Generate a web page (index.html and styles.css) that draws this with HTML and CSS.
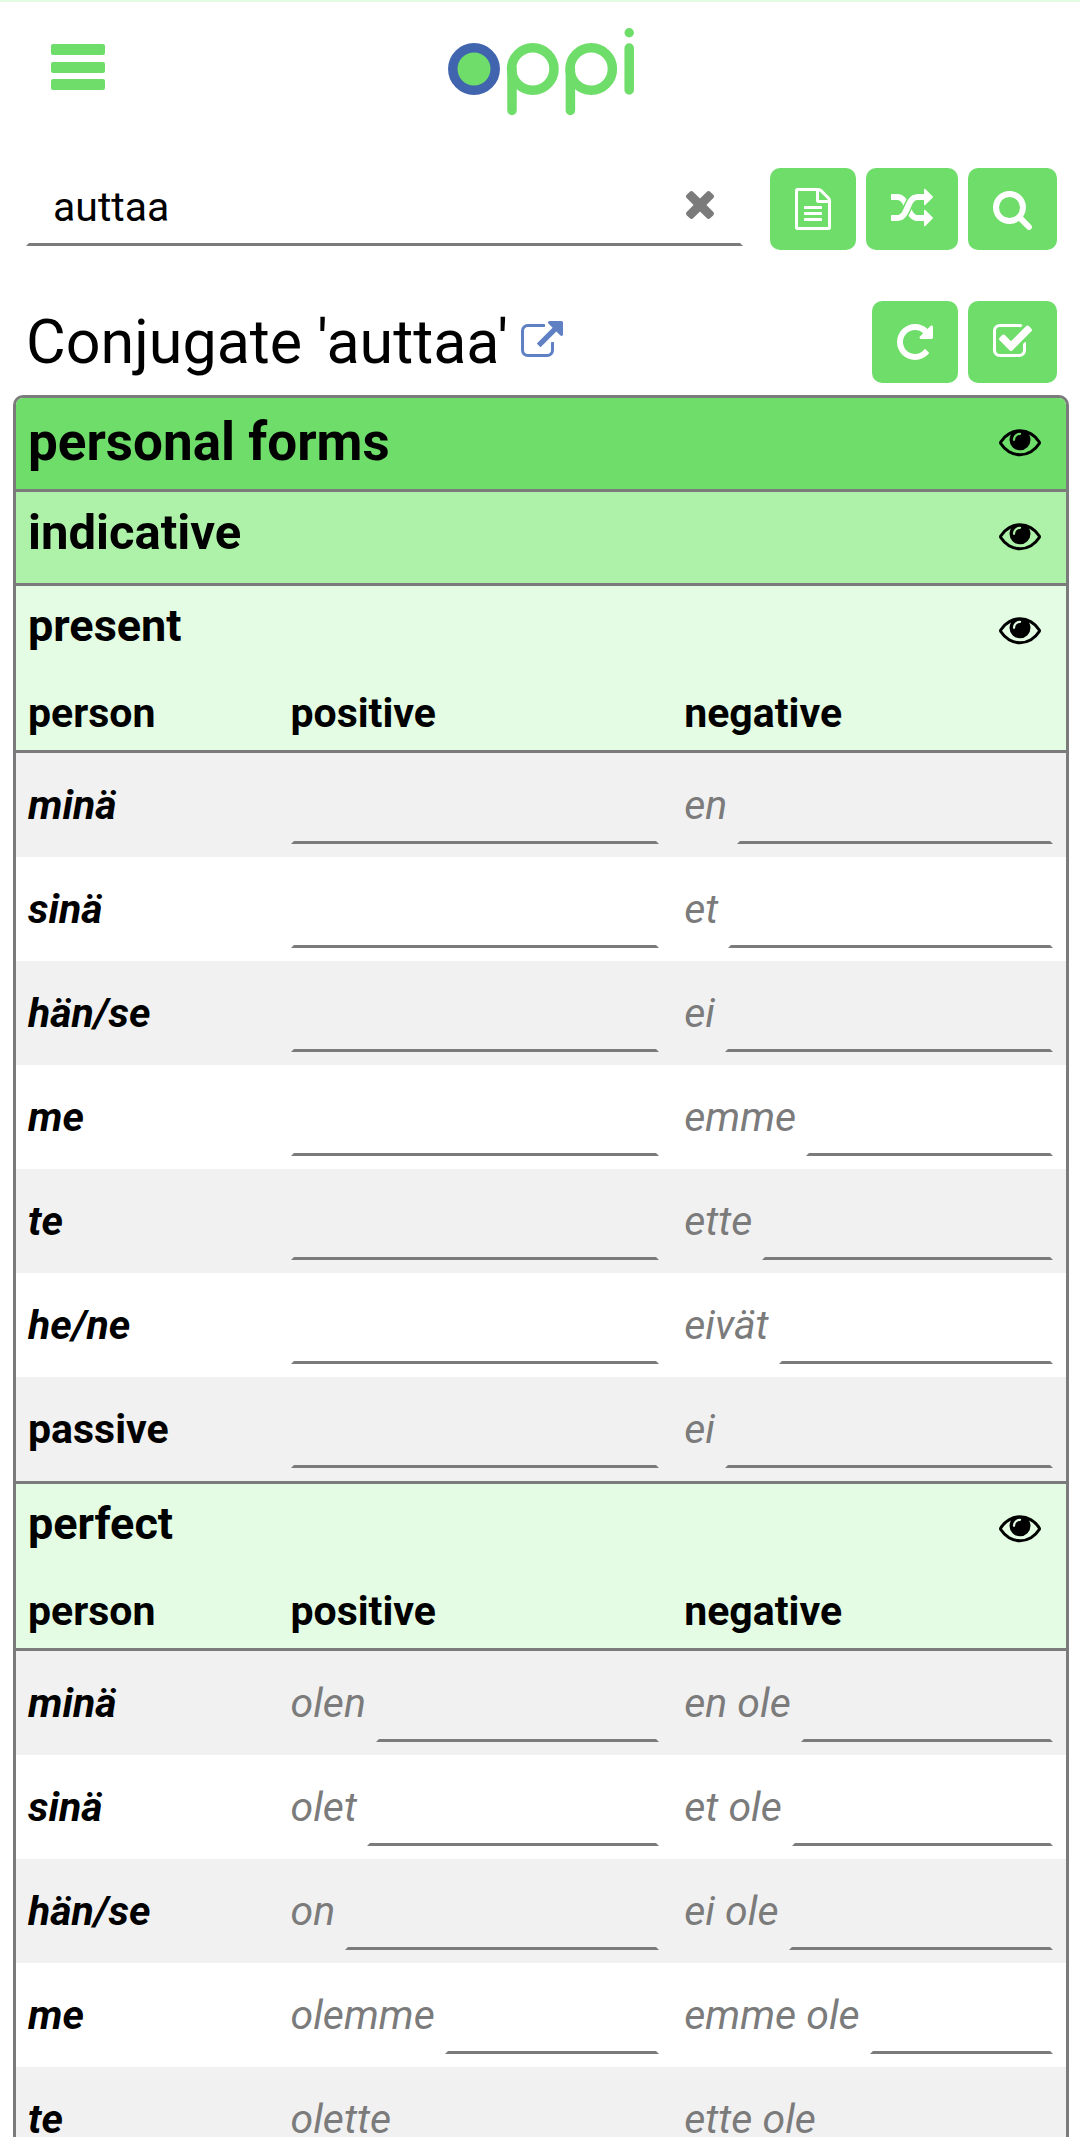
FILE: index.html
```html
<!DOCTYPE html>
<html lang="en">
<head>
<meta charset="utf-8">
<meta name="viewport" content="width=device-width, initial-scale=1">
<title>oppi – Conjugate 'auttaa'</title>
<link rel="stylesheet" href="styles.css">
</head>
<body>
<svg class="sprite" aria-hidden="true">
  <symbol id="eye" viewBox="0 384 1792 1216"><path d="M1664 960q-152-236-381-353 61 104 61 225 0 185-131.500 316.500t-316.500 131.500-316.500-131.500-131.500-316.500q0-121 61-225-229 117-381 353 133 205 333.500 326.500t434.500 121.500 434.500-121.500 333.500-326.500zm-720-384q0-20-14-34t-34-14q-125 0-214.500 89.500t-89.500 214.500q0 20 14 34t34 14 34-14 14-34q0-86 61-147t147-61q20 0 34-14t14-34zm848 384q0 34-20 69-140 230-376.500 368.500t-499.500 138.500-499.500-139-376.500-368q-20-35-20-69t20-69q140-229 376.500-368t499.500-139 499.500 139 376.500 368q20 35 20 69z"/></symbol>
</svg>

<div class="page">
  <header class="header">
    <button class="menu" type="button" aria-label="Menu">
      <svg width="54" height="46" viewBox="0 0 54 46"><rect width="54" height="11" rx="2"/><rect y="18" width="54" height="11" rx="2"/><rect y="35" width="54" height="11" rx="2"/></svg>
    </button>
    <a class="logo" href="#" aria-label="oppi">
      <svg width="186" height="88" viewBox="0 0 186 88" stroke="#6fdd6a" stroke-width="9.500" stroke-linecap="round">
        <circle cx="26" cy="41" r="21.200" fill="#6fdd6a" stroke="#4164ae"/>
        <circle cx="84.800" cy="41" r="21.200"/>
        <path d="M64 41v41.500"/>
        <circle cx="143.200" cy="41" r="21.200"/>
        <path d="M122.400 41v41.500M181.200 20v42"/>
        <circle cx="181.200" cy="4.800" r="4.700" fill="#6fdd6a" stroke="none"/>
      </svg>
    </a>
  </header>

  <main>
    <form class="toolbar search">
      <div class="search-box">
        <input class="line-input search-input" type="text" value="auttaa" aria-label="Verb">
        <button class="clear" type="button" aria-label="Clear">
          <svg width="28" height="28" viewBox="302 366 1188 1188"><path d="M1490 1322q0 40-28 68l-136 136q-28 28-68 28t-68-28l-294-294-294 294q-28 28-68 28t-68-28l-136-136q-28-28-28-68t28-68l294-294-294-294q-28-28-28-68t28-68l136-136q28-28 68-28t68 28l294 294 294-294q28-28 68-28t68 28l136 136q28 28 28 68t-28 68l-294 294 294 294q28 28 28 68z"/></svg>
        </button>
      </div>
      <div class="buttons">
        <button class="btn" type="button" aria-label="Text">
          <svg width="36" height="42" viewBox="128 0 1536 1792"><path d="M1596 380q28 28 48 76t20 88v1152q0 40-28 68t-68 28h-1344q-40 0-68-28t-28-68v-1600q0-40 28-68t68-28h896q40 0 88 20t76 48zm-444-244v376h376q-10-29-22-41l-313-313q-12-12-41-22zm384 1528v-1024h-416q-40 0-68-28t-28-68v-416h-768v1536h1280zm-1024-864q0-14 9-23t23-9h704q14 0 23 9t9 23v64q0 14-9 23t-23 9h-704q-14 0-23-9t-9-23v-64zm736 224q14 0 23 9t9 23v64q0 14-9 23t-23 9h-704q-14 0-23-9t-9-23v-64q0-14 9-23t23-9h704zm0 256q14 0 23 9t9 23v64q0 14-9 23t-23 9h-704q-14 0-23-9t-9-23v-64q0-14 9-23t23-9h704z"/></svg>
        </button>
        <button class="btn" type="button" aria-label="Random verb">
          <svg width="42" height="42" viewBox="0 0 1792 1792"><path d="M666 481q-60 92-137 273-22-45-37-72.500t-40.500-63.500-51-56.500-63-35-81.500-14.500h-224q-14 0-23-9t-9-23v-192q0-14 9-23t23-9h224q250 0 410 225zm1126 799q0 14-9 23l-320 320q-9 9-23 9-13 0-22.500-9.500t-9.500-22.500v-192q-32 0-85 .5t-81 1-73-1-71-5-64-10.500-63-18.500-58-28.500-59-40-55-53.500-56-69.500q59-93 136-273 22 45 37 72.500t40.500 63.500 51 56.500 63 35 81.500 14.500h256v-192q0-14 9-23t23-9q12 0 24 10l319 319q9 9 9 23zm0-896q0 14-9 23l-320 320q-9 9-23 9-13 0-22.500-9.500t-9.500-22.500v-192h-256q-48 0-87 15t-69 45-51 61.500-45 77.500q-32 62-78 171-29 66-49.500 111t-54 105-64 100-74 83-90 68.500-106.500 42-128 16.500h-224q-14 0-23-9t-9-23v-192q0-14 9-23t23-9h224q48 0 87-15t69-45 51-61.500 45-77.500q32-62 78-171 29-66 49.500-111t54-105 64-100 74-83 90-68.500 106.500-42 128-16.500h256v-192q0-14 9-23t23-9q12 0 24 10l319 319q9 9 9 23z"/></svg>
        </button>
        <button class="btn" type="submit" aria-label="Search">
          <svg width="39" height="42" viewBox="64 0 1664 1792"><path d="M1216 832q0-185-131.500-316.500t-316.500-131.500-316.500 131.500-131.500 316.500 131.500 316.500 316.500 131.500 316.500-131.500 131.500-316.500zm512 832q0 52-38 90t-90 38q-54 0-90-38l-343-342q-179 124-399 124-143 0-273.500-55.500t-225-150-150-225-55.500-273.500 55.500-273.500 150-225 225-150 273.500-55.500 273.500 55.500 225 150 150 225 55.500 273.500q0 220-124 399l343 343q37 37 37 90z"/></svg>
        </button>
      </div>
    </form>

    <div class="toolbar">
      <h1 class="title">Conjugate 'auttaa' <a class="external" href="#" aria-label="Open dictionary entry"><svg width="42" height="42" viewBox="0 0 1792 1792"><path d="M1408 928v320q0 119-84.500 203.500t-203.500 84.500h-832q-119 0-203.500-84.500t-84.500-203.500v-832q0-119 84.500-203.500t203.500-84.500h704q14 0 23 9t9 23v64q0 14-9 23t-23 9h-704q-66 0-113 47t-47 113v832q0 66 47 113t113 47h832q66 0 113-47t47-113v-320q0-14 9-23t23-9h64q14 0 23 9t9 23zm384-864v512q0 26-19 45t-45 19-45-19l-176-176-652 652q-10 10-23 10t-23-10l-114-114q-10-10-10-23t10-23l652-652-176-176q-19-19-19-45t19-45 45-19h512q26 0 45 19t19 45z"/></svg></a></h1>
      <div class="buttons">
        <button class="btn" type="button" aria-label="Reset">
          <svg width="36" height="42" viewBox="128 0 1536 1792"><path d="M1664 256v448q0 26-19 45t-45 19h-448q-42 0-59-40-17-39 14-69l138-138q-148-137-349-137-104 0-198.500 40.500t-163.500 109.500-109.500 163.500-40.500 198.500 40.500 198.500 109.500 163.500 163.500 109.500 198.500 40.500q119 0 225-52t179-147q7-10 23-12 15 0 25 9l137 138q9 8 9.500 20.500t-7.500 22.500q-109 132-264 204.500t-327 72.500q-156 0-298-61t-245-164-164-245-61-298 61-298 164-245 245-164 298-61q147 0 284.500 55.500t244.500 156.500l130-129q29-31 70-14 39 17 39 59z"/></svg>
        </button>
        <button class="btn" type="button" aria-label="Check answers">
          <svg width="39" height="42" viewBox="64 0 1664 1792"><path d="M1472 930v318q0 119-84.500 203.500t-203.500 84.500h-832q-119 0-203.500-84.500t-84.500-203.500v-832q0-119 84.500-203.500t203.500-84.500h832q63 0 117 25 15 7 18 23 3 17-9 29l-49 49q-10 10-23 10-3 0-9-2-23-6-45-6h-832q-66 0-113 47t-47 113v832q0 66 47 113t113 47h832q66 0 113-47t47-113v-254q0-13 9-22l64-64q10-10 23-10 6 0 12 3 20 8 20 29zm231-489l-814 814q-24 24-57 24t-57-24l-430-430q-24-24-24-57t24-57l110-110q24-24 57-24t57 24l263 263 647-647q24-24 57-24t57 24l110 110q24 24 24 57t-24 57z"/></svg>
        </button>
      </div>
    </div>

    <section class="forms">
      <div class="bar bar-group"><h2>personal forms</h2><button class="toggle" type="button" aria-label="Toggle personal forms"><svg width="42" height="29"><use href="#eye"/></svg></button></div>
      <div class="bar bar-mood"><h3>indicative</h3><button class="toggle" type="button" aria-label="Toggle indicative"><svg width="42" height="29"><use href="#eye"/></svg></button></div>

      <div class="bar bar-tense"><h4>present</h4><button class="toggle" type="button" aria-label="Toggle present"><svg width="42" height="29"><use href="#eye"/></svg></button></div>
      <table>
        <thead><tr><th scope="col" class="person">person</th><th scope="col">positive</th><th scope="col">negative</th></tr></thead>
        <tbody>
          <tr><th scope="row"><i>minä</i></th><td><label><input class="line-input" type="text" aria-label="minä, positive"></label></td><td><label>en<input class="line-input" type="text"></label></td></tr>
          <tr><th scope="row"><i>sinä</i></th><td><label><input class="line-input" type="text" aria-label="sinä, positive"></label></td><td><label>et<input class="line-input" type="text"></label></td></tr>
          <tr><th scope="row"><i>hän/se</i></th><td><label><input class="line-input" type="text" aria-label="hän/se, positive"></label></td><td><label>ei<input class="line-input" type="text"></label></td></tr>
          <tr><th scope="row"><i>me</i></th><td><label><input class="line-input" type="text" aria-label="me, positive"></label></td><td><label>emme<input class="line-input" type="text"></label></td></tr>
          <tr><th scope="row"><i>te</i></th><td><label><input class="line-input" type="text" aria-label="te, positive"></label></td><td><label>ette<input class="line-input" type="text"></label></td></tr>
          <tr><th scope="row"><i>he/ne</i></th><td><label><input class="line-input" type="text" aria-label="he/ne, positive"></label></td><td><label>eivät<input class="line-input" type="text"></label></td></tr>
          <tr><th scope="row">passive</th><td><label><input class="line-input" type="text" aria-label="passive, positive"></label></td><td><label>ei<input class="line-input" type="text"></label></td></tr>
        </tbody>
      </table>

      <div class="bar bar-tense bar-next"><h4>perfect</h4><button class="toggle" type="button" aria-label="Toggle perfect"><svg width="42" height="29"><use href="#eye"/></svg></button></div>
      <table>
        <thead><tr><th scope="col" class="person">person</th><th scope="col">positive</th><th scope="col">negative</th></tr></thead>
        <tbody>
          <tr><th scope="row"><i>minä</i></th><td><label>olen<input class="line-input" type="text"></label></td><td><label>en ole<input class="line-input" type="text"></label></td></tr>
          <tr><th scope="row"><i>sinä</i></th><td><label>olet<input class="line-input" type="text"></label></td><td><label>et ole<input class="line-input" type="text"></label></td></tr>
          <tr><th scope="row"><i>hän/se</i></th><td><label>on<input class="line-input" type="text"></label></td><td><label>ei ole<input class="line-input" type="text"></label></td></tr>
          <tr><th scope="row"><i>me</i></th><td><label>olemme<input class="line-input" type="text"></label></td><td><label>emme ole<input class="line-input" type="text"></label></td></tr>
          <tr><th scope="row"><i>te</i></th><td><label>olette<input class="line-input" type="text"></label></td><td><label>ette ole<input class="line-input" type="text"></label></td></tr>
        </tbody>
      </table>
    </section>
  </main>
</div>
</body>
</html>
```
FILE: styles.css
```css
:root {
  --green: #6fdd6a;
  --green-mid: #aef2a9;
  --green-pale: #e4fce3;
  --grey: #7b7b7b;
  --stripe: #f1f1f1;
  --blue: #6080c4;
}

* { box-sizing: border-box; }

body {
  margin: 0;
  background: #fff;
  color: #000;
  font: 41px/47px Roboto, sans-serif;
}

button {
  margin: 0;
  padding: 0;
  border: 0;
  background: none;
  color: inherit;
  cursor: pointer;
}

svg { display: block; fill: currentColor; }
.sprite { position: absolute; width: 0; height: 0; }

/* The page scrolls inside the window */
.page {
  height: 100vh;
  overflow-y: auto;
  scrollbar-width: none;
  border-top: 2px solid var(--green-pale);
}

.header {
  display: grid;
  grid-template-columns: 1fr auto 1fr;
  align-items: start;
  padding: 26px 50px 0 51px;
}
.menu { justify-self: start; padding: 16px 0; color: var(--green); }
.logo svg { fill: none; }

.toolbar {
  display: flex;
  align-items: center;
  justify-content: space-between;
  gap: 27px;
  padding: 0 23px 0 26px;
  margin-bottom: 12px;
}
.search {
  align-items: flex-start;
  margin-top: 52px;
  margin-bottom: 51px;
}
.buttons { display: flex; gap: 10px; }
.btn {
  display: flex;
  align-items: center;
  height: 82px;
  padding: 0 25px;
  border-radius: 10px;
  background: var(--green);
  color: #fff;
}

.line-input {
  flex: 1;
  min-width: 0;
  width: 100%;
  height: 78px;
  padding: 0;
  border: 3px solid transparent;
  border-bottom-color: var(--grey);
  border-radius: 0;
  background: none;
  font: inherit;
  color: #000;
  outline: 0;
}

.search-box { position: relative; flex: 1; }
.search-input { display: block; padding: 0 80px 0 24px; }
.clear {
  position: absolute;
  top: 23px;
  right: 29px;
  color: var(--grey);
}

.title {
  display: flex;
  align-items: center;
  gap: 13px;
  margin: 0;
  font-size: 61px;
  font-weight: 400;
  line-height: 80px;
}
.external { color: var(--blue); }

.forms {
  margin: 0 11px 13px 13px;
  border: 3px solid var(--grey);
  border-radius: 10px;
  overflow: hidden;
}

.bar {
  display: flex;
  justify-content: space-between;
  align-items: flex-start;
  padding: 13px 13px 13px 12px;
}
.bar h2, .bar h3, .bar h4 { margin: 0; font-weight: 700; }
.bar h2 { font-size: 53px; line-height: 62px; }
.bar h3 { font-size: 49px; line-height: 55px; }
.bar h4 { font-size: 45px; line-height: 53px; }
.bar-group { background: var(--green); border-bottom: 3px solid var(--grey); }
.bar-mood { background: var(--green-mid); border-bottom: 3px solid var(--grey); }
.bar-tense { background: var(--green-pale); }
.bar-next { border-top: 3px solid var(--grey); }
.toggle {
  display: flex;
  align-items: center;
  height: 65px;
  padding: 0 12px;
}

table {
  width: 100%;
  table-layout: fixed;
  border-collapse: separate;
  border-spacing: 0;
}
th, td { padding: 13px 13px 13px 12px; text-align: left; }
.person { width: 25%; }
thead th { background: var(--green-pale); border-bottom: 3px solid var(--grey); }
tbody tr:nth-child(odd) { background: var(--stripe); }
td { color: var(--grey); font-style: italic; }
label { display: flex; align-items: center; gap: 10px; }
```
